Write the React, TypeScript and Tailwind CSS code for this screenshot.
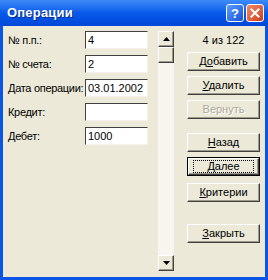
import React from "react";

const font = { fontFamily: '"Liberation Sans", Arial, sans-serif' };

interface FieldProps {
  label: string;
  value: string;
}

const Field: React.FC<FieldProps> = ({ label, value }) => (
  <div className="flex items-center h-[18px]">
    <span className="w-[77px] shrink-0 text-[11px] tracking-[-0.3px] text-black whitespace-nowrap">{label}</span>
    <div className="w-[63px] h-[18px] bg-white border border-t-[#404040] border-l-[#404040] border-r-[#f4f2ea] border-b-[#f4f2ea] text-[11px] text-black pl-[2px] leading-[16px]">
      {value}
    </div>
  </div>
);

interface BtnProps {
  pre?: string;
  mn: string;
  post: string;
  disabled?: boolean;
  isDefault?: boolean;
  className?: string;
}

const Btn: React.FC<BtnProps> = ({ pre = "", mn, post, disabled, isDefault, className }) => (
  <div
    className={`w-[73px] h-[19px] shrink-0 ${isDefault ? "border border-black" : ""} ${className ?? ""}`}
  >
    <div className="w-full h-full bg-[#ece9d8] border border-t-white border-l-white border-r-[#404040] border-b-[#404040] shadow-[inset_-1px_-1px_0_#9d9a8c] flex items-center justify-center">
      <div
        className={`flex items-center justify-center text-[11px] leading-none ${
          disabled ? "text-[#aca899] [text-shadow:1px_1px_0_#ffffff]" : "text-black"
        } ${isDefault ? "border border-dotted border-black w-[61px] h-[13px]" : ""}`}
      >
        <span>
          {pre}
          <span className={disabled ? "" : "underline underline-offset-1"}>{mn}</span>
          {post}
        </span>
      </div>
    </div>
  </div>
);

const Arrow: React.FC<{ down?: boolean }> = ({ down }) => (
  <div className="w-[16px] h-[16px] bg-[#ece9d8] border border-t-white border-l-white border-r-[#404040] border-b-[#404040] shadow-[inset_-1px_-1px_0_#9d9a8c] flex items-center justify-center">
    <svg width="7" height="4" viewBox="0 0 7 4">
      {down ? <polygon points="0,0 7,0 3.5,4" fill="#000" /> : <polygon points="0,4 7,4 3.5,0" fill="#000" />}
    </svg>
  </div>
);

export default function App() {
  return (
    <div className="w-[268px] h-[280px] bg-[#0a55e6] flex flex-col" style={font}>
      {/* title bar */}
      <div className="h-[26px] shrink-0 bg-gradient-to-b from-[#3d8bfa] via-[#0859ea] to-[#0048d8] flex items-center pl-[7px] pr-[4px]">
        <span className="text-white font-bold text-[13px] tracking-[0.2px] [text-shadow:1px_1px_0_#0a2a8a] flex-1">
          Операции
        </span>
        <div className="w-[18px] h-[18px] rounded-[3px] border border-white bg-gradient-to-br from-[#5a9bff] to-[#1752d8] flex items-center justify-center text-white font-bold text-[13px] leading-none">
          ?
        </div>
        <div className="ml-[2px] w-[18px] h-[18px] rounded-[3px] border border-white bg-gradient-to-br from-[#f08a6a] to-[#cf3a14] flex items-center justify-center">
          <svg width="10" height="10" viewBox="0 0 10 10">
            <path d="M1.5 1.5 L8.5 8.5 M8.5 1.5 L1.5 8.5" stroke="#fff" strokeWidth="2" strokeLinecap="square" />
          </svg>
        </div>
      </div>

      {/* body */}
      <div className="flex-1 mx-[3px] mb-[3px] bg-[#ece9d8] flex pt-[5px] pl-[5px]">
        <div className="flex flex-col gap-[6px] w-[140px]">
          <Field label="№ п.п.:" value="4" />
          <Field label="№ счета:" value="2" />
          <Field label="Дата операции:" value="03.01.2002" />
          <Field label="Кредит:" value="" />
          <Field label="Дебет:" value="1000" />
        </div>

        <div className="ml-[10px] w-[16px] h-[240px] flex flex-col bg-[#f7f5ee]">
          <Arrow />
          <div className="w-[16px] h-[16px] bg-[#ece9d8] border border-t-white border-l-white border-r-[#404040] border-b-[#404040] shadow-[inset_-1px_-1px_0_#9d9a8c]" />
          <div className="flex-1" />
          <Arrow down />
        </div>

        <div className="ml-[13px] flex flex-col">
          <div className="w-[73px] h-[18px] flex items-center justify-center text-[11px] text-black">4 из 122</div>
          <Btn pre="Д" mn="о" post="бавить" className="mt-[3px]" />
          <Btn mn="У" post="далить" className="mt-[5px]" />
          <Btn mn="В" post="ернуть" disabled className="mt-[5px]" />
          <Btn mn="Н" post="азад" className="mt-[14px]" />
          <Btn mn="Д" post="алее" isDefault className="mt-[5px]" />
          <Btn mn="К" post="ритерии" className="mt-[7px]" />
          <Btn mn="З" post="акрыть" className="mt-[22px]" />
        </div>
      </div>
    </div>
  );
}
